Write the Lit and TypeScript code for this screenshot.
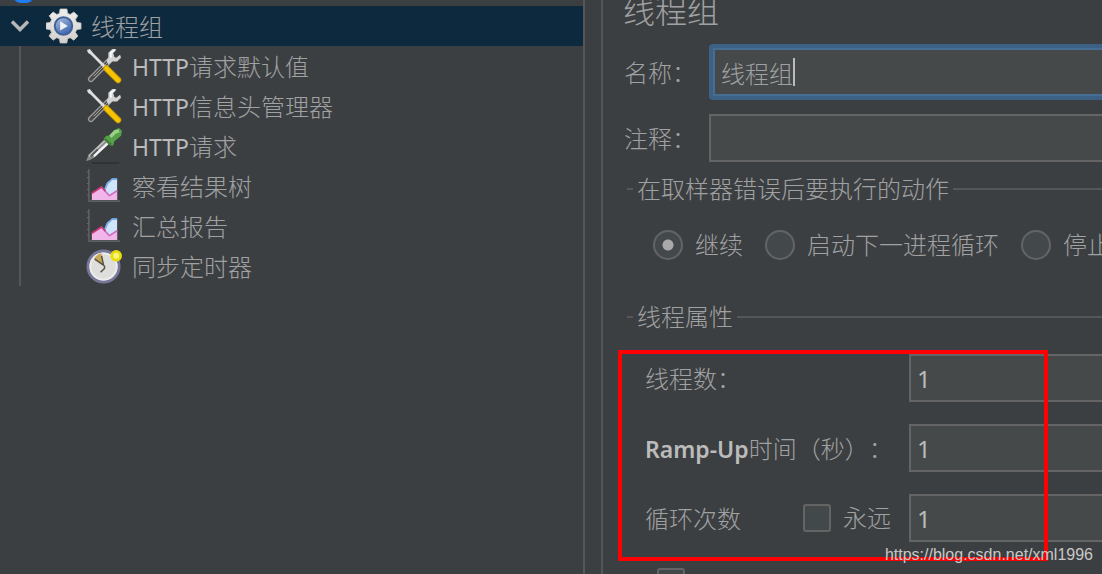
import { LitElement, html, css, svg } from "lit";
import { customElement, property } from "lit/decorators.js";

const gear = svg`
  <defs>
    <linearGradient id="metal" x1="0" y1="0" x2="0" y2="1">
      <stop offset="0" stop-color="#eeeeed"/><stop offset="1" stop-color="#d2cfcd"/>
    </linearGradient>
    <linearGradient id="lens" x1="0" y1="0" x2="0.6" y2="1">
      <stop offset="0" stop-color="#b4c4de"/><stop offset="0.55" stop-color="#6f8fc2"/><stop offset="1" stop-color="#3f68ad"/>
    </linearGradient>
  </defs>
  <path fill="url(#metal)" stroke="#c4c2c0" stroke-width="0.8" stroke-linejoin="round"
    d="M14.500 1h7l.8 4.600 2.600 1 3.800-2.600 4 4-2.400 3.800 1.200 2.900 4.500.8v6l-4.600.8-1.100 2.800 2.500 3.800-4.200 4.200-3.800-2.600-2.600 1.100-.8 4.400h-6.800l-.9-4.400-2.600-1.100-3.800 2.600-4.200-4.200 2.500-3.800-1.100-2.800L0 21.500v-6l4.500-.8 1.200-2.900L3.300 8l4-4 3.800 2.600 2.600-1z"/>
  <circle cx="18" cy="18.500" r="9" fill="url(#lens)" stroke="#40629c" stroke-width="2"/>
  <path d="M14.500 13.500v9.500l8-4.500z" fill="#eef2f8"/>`;

const tools = svg`
  <path d="M5 32 24 13" stroke="#9c9c9c" stroke-width="6" stroke-linecap="round"/>
  <path d="M5 32 24 13" stroke="#4a4a4a" stroke-width="3.500" stroke-linecap="round"/>
  <path d="M8 29 24 13" stroke="#a8a8a8" stroke-width="1"/>
  <path d="M21 13 23 10 23 5 27 1 31 1 28 5 29 9 31 10 35 7 36 10 32 14 27 14 23 17z" fill="#d2d2d2"/>
  <path d="M30 2 25.500 5 25.500 10" fill="none" stroke="#f6f6f6" stroke-width="2"/>
  <path d="M1 2 4 1 7 5 21 19 19 21 5 7 2 5z" fill="#dedede"/>
  <path d="M21 21 33 33" stroke="#c79a0a" stroke-width="6.500" stroke-linecap="round"/>
  <path d="M21 21 33 33" stroke="#f8c400" stroke-width="4.500" stroke-linecap="round"/>`;

const dropper = svg`
  <path d="M6 36h28" stroke="#303335" stroke-width="2"/>
  <path d="M0 34 3 27 19 12 24 16 9 30 4 33z" fill="#8b8c8c"/>
  <path d="M3 29 19 13" fill="none" stroke="#c4c4c4" stroke-width="1.500"/>
  <path d="M8 29 22 16" fill="none" stroke="#f4f4f4" stroke-width="2.500"/>
  <path d="M5 29 12 22" stroke="#555757" stroke-width="2"/>
  <path d="M18 11 21 8 24 8 29 2 34 0 37 3 36 8 29 14 28 18 25 18z" fill="#57a04a"/>
  <path d="M25 9 30 4 34 3" fill="none" stroke="#97d286" stroke-width="3.500"/>
  <path d="M19 11 26 17" stroke="#3f7d38" stroke-width="2"/>`;

const chart = svg`
  <path d="M3 1v33h32" fill="none" stroke="#6b6c6e" stroke-width="1.200"/>
  <path d="M1 4h2M1 10h2M1 16h2M1 22h2M1 28h2" stroke="#6b6c6e"/>
  <path d="M19 22 22 15 27 11h5v22H21z" fill="#cfe4fb"/>
  <path d="M19 23 22 16 27 11.500h5" fill="none" stroke="#7aaeee" stroke-width="1.800"/>
  <path d="M6 33v-7l6-4 4-3 4 5 5 4 7-5v10z" fill="#f0b6ea"/>
  <path d="M6 26 12 22 16 19.500 20 24" fill="none" stroke="#c83a7c" stroke-width="1.800"/>
  <path d="M20 24 24 28.500 32 23.500" fill="none" stroke="#cf6fc4" stroke-width="1.800"/>`;

const clock = svg`
  <circle cx="18" cy="19" r="16" fill="#dededc" stroke="#77779a" stroke-width="3"/>
  <circle cx="18" cy="19" r="13.500" fill="none" stroke="#ecece9" stroke-width="2"/>
  <path d="M17 18 8 11q4-5 8-5.500z" fill="#c6a657"/>
  <path d="M9 11.500 18 17.500 16 8M19 18v3l-4 4" fill="none" stroke="#55513f" stroke-width="1.500"/>
  <circle cx="31" cy="8" r="6" fill="#e8dc10"/>
  <circle cx="31" cy="8" r="3" fill="#fbf47a"/>`;

const flask = svg`
  <path d="M14 2h8v10l8 14q0 9-12 10-12-1-12-10l8-14z" fill="#c9d8e8"/>
  <path d="M6 24h24q2 11-12 12Q4 35 6 24z" fill="#0b63d6"/>
  <path d="M11 33q7 3 14 0" fill="none" stroke="#1f7df0" stroke-width="3"/>`;

const icons = { gear, tools, dropper, chart, clock, flask };

interface TreeItem {
  icon: keyof typeof icons;
  latin?: string;
  name: string;
}

const children: TreeItem[] = [
  { icon: "tools", latin: "HTTP", name: "请求默认值" },
  { icon: "tools", latin: "HTTP", name: "信息头管理器" },
  { icon: "dropper", latin: "HTTP", name: "请求" },
  { icon: "chart", name: "察看结果树" },
  { icon: "chart", name: "汇总报告" },
  { icon: "clock", name: "同步定时器" },
];

@customElement("tree-icon")
class TreeIcon extends LitElement {
  @property() name: keyof typeof icons = "gear";
  static styles = css`
    :host { display: block; flex: none; width: 36px; height: 36px; }
    svg { display: block; }
  `;
  render() {
    return html`<svg width="36" height="36" viewBox="0 0 37 37" fill="none" aria-hidden="true">${icons[this.name]}</svg>`;
  }
}

@customElement("plan-tree")
class PlanTree extends LitElement {
  static styles = css`
    :host { display: block; overflow: hidden; border-right: 2px solid #555657; }
    ul { list-style: none; margin: 0; padding: 0; }
    .tree { margin-top: -34px; }
    .row { display: flex; align-items: center; height: 40px; white-space: nowrap; }
    .name { padding-top: 2px; }
    .root { padding-left: 6px; }
    .group { padding-left: 10px; gap: 9px; background: #0d293e; }
    .toggle { display: flex; padding: 0; border: 0; background: none; width: 27px; height: 20px; align-items: center; }
    .children { margin-left: 19px; border-left: 2px solid #555657; }
    .leaf { padding-left: 65px; gap: 10px; }
    .latin { color: #bbbbbb; font-size: 23px; font-weight: 400; }
  `;
  render() {
    return html`
      <ul class="tree">
        <li class="row root"><tree-icon name="flask"></tree-icon></li>
        <li>
          <div class="row group">
            <button class="toggle" aria-label="折叠" aria-expanded="true">
              <svg width="20" height="14" viewBox="0 0 20 14" aria-hidden="true">
                <path d="M2 2.500 10 10.500 18 2.500" fill="none" stroke="#b5b7b8" stroke-width="3.500" />
              </svg>
            </button>
            <tree-icon name="gear"></tree-icon>
            <span class="name">线程组</span>
          </div>
          <ul class="children">
            ${children.map(
              (c) => html`<li class="row leaf">
                <tree-icon name=${c.icon}></tree-icon>
                <span class="name">${c.latin ? html`<span class="latin">${c.latin}</span>` : ""}${c.name}</span>
              </li>`
            )}
          </ul>
        </li>
      </ul>
    `;
  }
}

@customElement("thread-group-form")
class ThreadGroupForm extends LitElement {
  static styles = css`
    :host { display: block; overflow: hidden; margin-left: 16px; padding-left: 20px; border-left: 2px solid #555657; }
    * { box-sizing: border-box; }
    form { margin: -5px -20px 0 0; }
    h1 { margin: 0 0 17px; font-size: 32px; line-height: 32px; font-weight: 300; }
    .field { display: grid; grid-template-columns: 86px 1fr; align-items: center; }
    .field > label, .prop > label, .loop > label:first-child { padding: 2px 0 0 1px; }
    .comment { margin: 14px 0 11px; }
    .text {
      display: block; width: 100%; height: 48px; padding: 0 6px; margin: 0;
      border: 2px solid #646464; border-radius: 0; background: #45494a;
      color: #bbbbbb; font: inherit; font-weight: 400; outline: none;
    }
    .edit { position: relative; padding: 4px; border-radius: 4px; background: #3d6185; }
    .edit .text { border-color: #466d94; color: #a0a1a2; font-weight: 300; caret-color: transparent; }
    .caret { position: absolute; left: 84px; top: 14px; width: 2px; height: 28px; background: #bbbbbb; }
    fieldset { margin: 0 0 0 4px; padding: 0; border: 0; border-top: 2px solid #555657; min-width: 0; }
    legend { margin-left: 6px; padding: 0 4px; line-height: 32px; }
    .radios { display: flex; gap: 22px; padding: 25px 0 41px 26px; white-space: nowrap; overflow: hidden; }
    .choice { display: flex; align-items: center; gap: 12px; flex: none; line-height: 30px; }
    .radio, .check { appearance: none; flex: none; margin: 0; border: 2px solid #646464; background: #43494a; }
    .radio { width: 30px; height: 30px; border-radius: 50%; }
    .radio:checked { background: radial-gradient(circle, #a9a9a9 0 5px, #43494a 6px); }
    .check { display: grid; place-items: center; width: 28px; height: 28px; border-radius: 3px; }
    .check:checked::before {
      content: ""; width: 9px; height: 18px; border: solid #a9a9a9; border-width: 0 3px 3px 0; rotate: 40deg;
    }
    .props { position: relative; display: grid; gap: 22px; margin: 21px 0 26px 17px; }
    .prop { display: grid; grid-template-columns: 265px 1fr; align-items: center; }
    .loop { display: grid; grid-template-columns: 159px 1fr; align-items: center; }
    .wide { text-spacing-trim: space-all; }
    .latin { font-weight: 600; font-size: 23px; color: #bbbbbb; }
    .mark { position: absolute; left: -26px; top: -4px; bottom: -19px; width: 430px; border: 4px solid #ff0000; pointer-events: none; }
    .delay { margin-left: 30px; }
  `;
  render() {
    return html`
      <form>
        <h1>线程组</h1>
        <div class="field">
          <label for="name">名称：</label>
          <div class="edit">
            <input class="text" id="name" .value=${"线程组"} />
            <span class="caret"></span>
          </div>
        </div>
        <div class="field comment">
          <label for="comment">注释：</label>
          <input class="text" id="comment" />
        </div>
        <fieldset>
          <legend>在取样器错误后要执行的动作</legend>
          <div class="radios">
            ${["继续", "启动下一进程循环", "停止"].map(
              (t, i) => html`<label class="choice">
                <input class="radio" type="radio" name="action" ?checked=${i === 0} />${t}
              </label>`
            )}
          </div>
        </fieldset>
        <fieldset>
          <legend>线程属性</legend>
          <div class="props">
            <div class="prop">
              <label for="threads">线程数：</label>
              <input class="text" id="threads" .value=${"1"} />
            </div>
            <div class="prop">
              <label class="wide" for="ramp"><span class="latin">Ramp-Up</span>时间（秒）：</label>
              <input class="text" id="ramp" .value=${"1"} />
            </div>
            <div class="prop">
              <div class="loop">
                <label for="loops">循环次数</label>
                <label class="choice"><input class="check" type="checkbox" />永远</label>
              </div>
              <input class="text" id="loops" .value=${"1"} />
            </div>
            <div class="mark"></div>
          </div>
          <div class="delay"><input class="check" type="checkbox" checked aria-label="延迟创建线程直到需要" /></div>
        </fieldset>
      </form>
    `;
  }
}

@customElement("app-root")
class AppRoot extends LitElement {
  static styles = css`
    :host {
      display: grid;
      grid-template-columns: 585px minmax(0, 1fr);
      position: relative;
      height: 100vh;
      overflow: hidden;
      background: #3c3f41;
      color: #a0a1a2;
      font: 300 24px/32px "Noto Sans", "Noto Sans CJK SC", sans-serif;
    }
    .source {
      position: absolute; right: 9px; bottom: 9px;
      font: 400 16px/20px "Liberation Sans", sans-serif;
      color: #c8c8c8; text-decoration: none;
    }
  `;
  render() {
    return html`
      <plan-tree></plan-tree>
      <thread-group-form></thread-group-form>
      <a class="source" href="https://blog.csdn.net/xml1996">https://blog.csdn.net/xml1996</a>
    `;
  }
}
